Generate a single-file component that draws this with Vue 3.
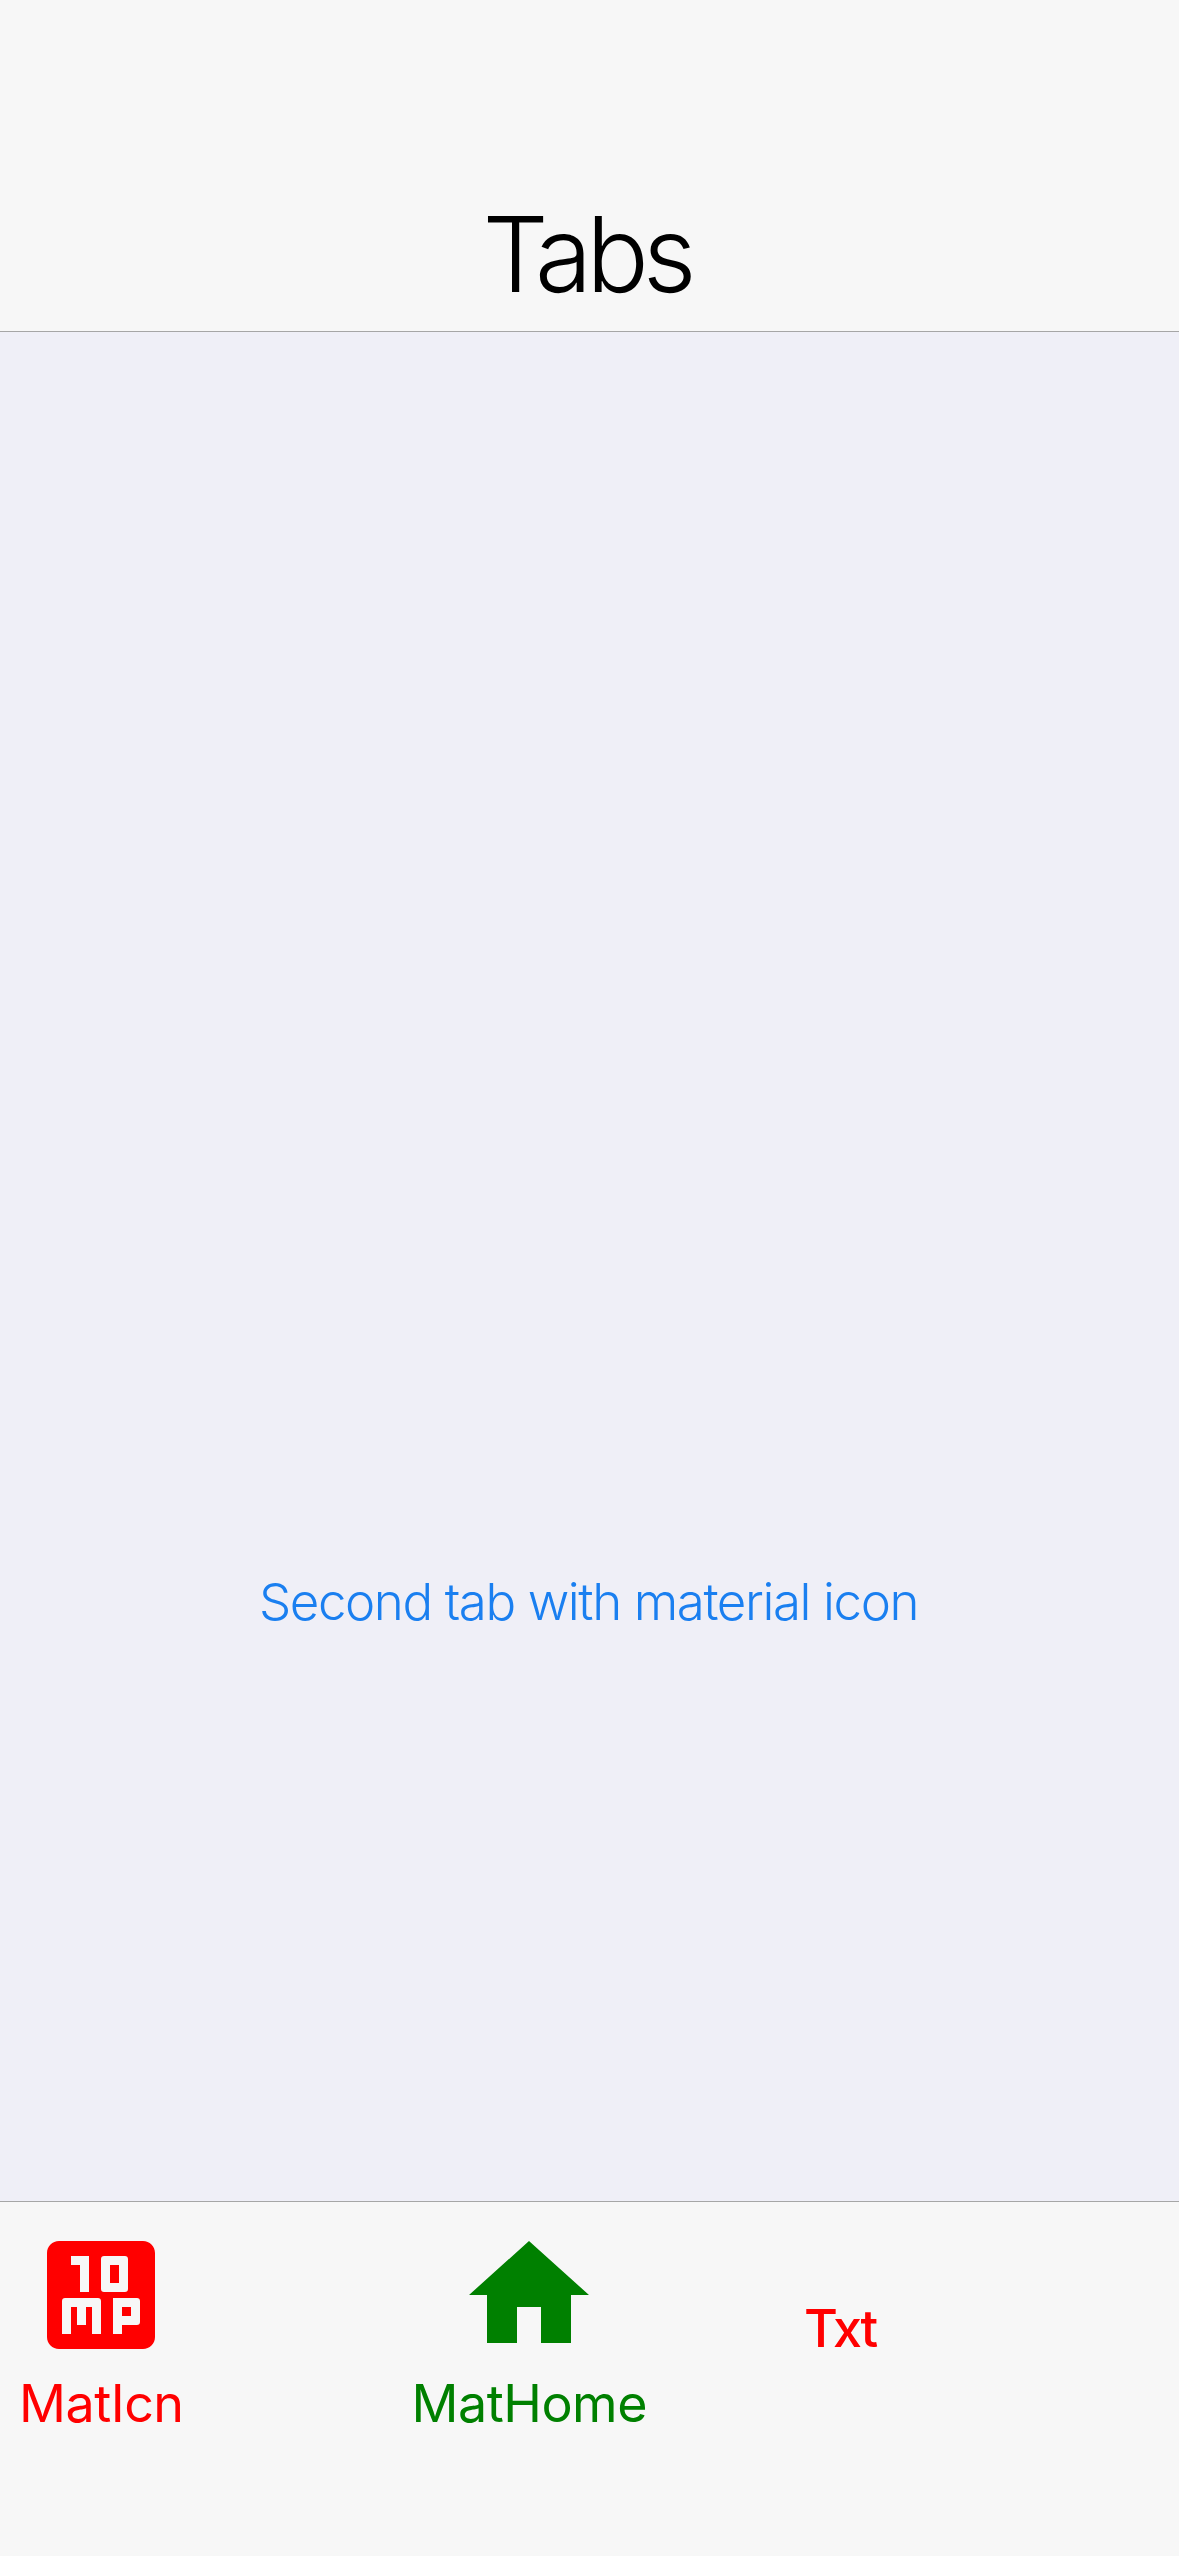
<script setup>
const title = "Tabs";
const message = "Second tab with material icon";
</script>

<template>
  <div class="screen">
    <header class="nav-bar">
      <h1 class="nav-title">{{ title }}</h1>
    </header>

    <main class="content">
      <p class="message">{{ message }}</p>
    </main>

    <nav class="tab-bar">
      <div class="tab tab-first">
        <svg class="tab-icon" viewBox="0 0 24 24">
          <path
            fill="#ff0000"
            fill-rule="evenodd"
            d="M5 3h14c1.1 0 2 .9 2 2v14c0 1.1-.9 2-2 2H5c-1.1 0-2-.9-2-2V5c0-1.1.9-2 2-2zM7 5.5V7h1.5v4.5H10v-6zM12.5 5.5c-.3 0-.5.2-.5.5v5c0 .3.2.5.5.5h3.5c.3 0 .5-.2.5-.5V6c0-.3-.2-.5-.5-.5zM13.5 7H15v3h-1.5zM6 12.5c-.3 0-.5.2-.5.5v5.5H7V14h1v3h1.5v-3h1v4.5H12V13c0-.3-.2-.5-.5-.5zM14 12.5v6h1.5V17h2.5c.3 0 .5-.2.5-.5V13c0-.3-.2-.5-.5-.5zM15.5 14H17v1.5h-1.5z"
          />
        </svg>
        <span class="tab-label red">MatIcn</span>
      </div>

      <div class="tab tab-second">
        <svg class="tab-icon" viewBox="0 0 24 24">
          <path fill="#008000" d="M10 20v-6h4v6h5v-8h3L12 3 2 12h3v8z" />
        </svg>
        <span class="tab-label green">MatHome</span>
      </div>

      <div class="tab tab-third">
        <span class="tab-label red text-only">Txt</span>
      </div>
    </nav>
  </div>
</template>

<style>
html,
body {
  margin: 0;
  background: #f7f7f7;
}
</style>

<style scoped>
.screen {
  width: 1179px;
  height: 2556px;
  display: flex;
  flex-direction: column;
  font-family: Inter, "Liberation Sans", sans-serif;
  overflow: hidden;
}

.nav-bar {
  height: 332px;
  box-sizing: border-box;
  display: flex;
  align-items: flex-end;
  justify-content: center;
  background: #f7f7f7;
  border-bottom: 1px solid #a6a6a6;
  padding: 0 6px 16px 0;
}

.nav-title {
  margin: 0;
  font-size: 104px;
  font-weight: 300;
  line-height: 122px;
  letter-spacing: -6px;
  color: #000;
}

.content {
  flex: 1;
  display: flex;
  align-items: flex-start;
  justify-content: center;
  background: #efeff7;
  padding: 1239px 2px 0 0;
}

.message {
  margin: 0;
  font-size: 51px;
  font-weight: 300;
  line-height: 62px;
  letter-spacing: -1.4px;
  color: #1a7ff0;
}

.tab-bar {
  height: 355px;
  box-sizing: border-box;
  display: flex;
  background: #f7f7f7;
  border-top: 1px solid #a6a6a6;
  padding-top: 21px;
}

.tab {
  display: flex;
  flex-direction: column;
  align-items: center;
}

.tab-first {
  margin-left: 19px;
}

.tab-second {
  margin-left: 228px;
}

.tab-third {
  margin-left: 157px;
  padding-top: 75px;
}

.tab-icon {
  width: 144px;
  height: 144px;
  display: block;
  margin-bottom: 6px;
}

.tab-label {
  font-size: 52px;
  line-height: 62px;
  letter-spacing: -0.5px;
  white-space: nowrap;
}

.red {
  color: #ff0000;
}

.green {
  color: #008000;
}

.text-only {
  font-weight: 500;
  letter-spacing: -2.3px;
}
</style>
